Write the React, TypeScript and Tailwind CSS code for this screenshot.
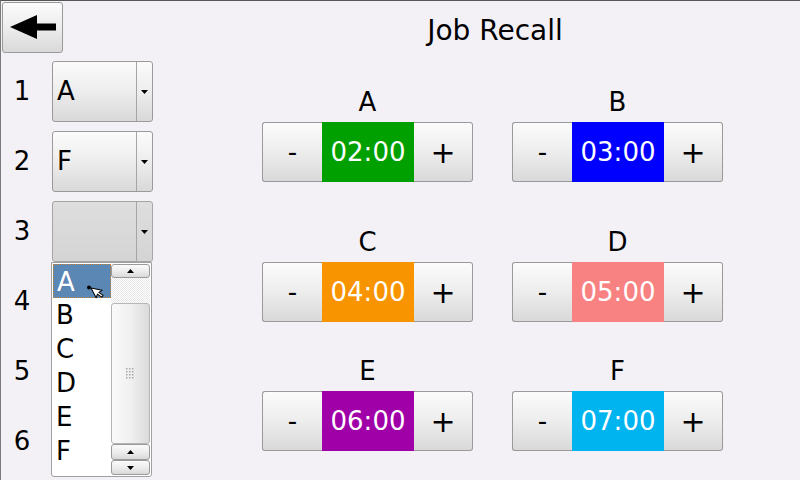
import React from "react";

const jobs = [
  { letter: "A", time: "02:00", color: "bg-[#00a000]" },
  { letter: "B", time: "03:00", color: "bg-[#0000ff]" },
  { letter: "C", time: "04:00", color: "bg-[#f89400]" },
  { letter: "D", time: "05:00", color: "bg-[#f88282]" },
  { letter: "E", time: "06:00", color: "bg-[#a000a8]" },
  { letter: "F", time: "07:00", color: "bg-[#00b4f0]" },
];

const rowGaps = ["mt-[40px]", "mt-[45px]", "mt-[34px]"];

const btnFace =
  "bg-linear-to-b from-[#fbfbfb] via-[#ededed] to-[#d9d9d9] border-[#9a9a9a]";

const Arrow = () => (
  <svg width="7" height="4" viewBox="0 0 7 4">
    <path d="M0 0 L7 0 L3.5 4 Z" fill="#000" />
  </svg>
);

const UpArrow = () => (
  <svg width="7" height="4" viewBox="0 0 7 4">
    <path d="M0 4 L7 4 L3.5 0 Z" fill="#000" />
  </svg>
);

const Combo = ({ value, open }: { value?: string; open?: boolean }) => (
  <div
    className={`relative flex h-[61px] w-[101px] rounded-[3px] border ${
      open
        ? "border-[#a5a5a5] bg-linear-to-b from-[#dedede] to-[#d4d4d4]"
        : btnFace
    }`}
  >
    <div className="flex flex-1 items-center pl-[4px] text-[26px]">{value}</div>
    <div className="flex w-[16px] items-center justify-center border-l border-[#a5a5a5]">
      <Arrow />
    </div>
    {open && <DropList />}
  </div>
);

const DropList = () => (
  <div className="absolute left-[-2px] top-full z-10 mt-[1px] flex h-[215px] w-[101px] rounded-b-[3px] border border-[#a0a0a0] bg-white p-[1px]">
    <div className="relative flex w-[58px] flex-col">
      {["A", "B", "C", "D", "E", "F"].map((l, i) => (
        <div
          key={l}
          className={`h-[34px] pl-[3px] text-[26px] leading-[34px] ${
            i === 0
              ? "border border-dotted border-[#c08040] bg-[#5b87b4] pl-[2px] leading-[32px] text-white"
              : "text-black"
          }`}
        >
          {l}
        </div>
      ))}
      {/* mouse pointer */}
      <svg
        className="absolute left-[33px] top-[20px]"
        width="20"
        height="20"
        viewBox="0 0 20 20"
      >
        <path
          d="M5 4 L5 15 L7.8 12.4 L10.2 17.2 L12.2 16.2 L9.9 11.5 L13.8 11.3 Z"
          fill="#fff"
          stroke="#000"
          strokeWidth="1"
          strokeLinejoin="round"
          transform="rotate(-28 5 4)"
        />
        <circle cx="3" cy="3.5" r="2" fill="#000" />
      </svg>
    </div>
    <div className="flex w-[39px] flex-col">
      <div className={`flex h-[14px] items-center justify-center rounded-[3px] border ${btnFace}`}>
        <UpArrow />
      </div>
      <div className="h-[25px] bg-[repeating-conic-gradient(#e6e6e6_0_25%,#ffffff_0_50%)] bg-[length:2px_2px]" />
      <div className="flex h-[141px] items-center justify-center rounded-[3px] border border-[#b5b5b5] bg-linear-to-r from-[#fafafa] via-[#f0f0f0] to-[#dadada]">
        <svg width="9" height="12" viewBox="0 0 9 12">
          {[0, 1, 2].map((c) =>
            [0, 1, 2, 3].map((r) => (
              <rect key={`${c}-${r}`} x={c * 3} y={r * 3} width="1.5" height="1.5" fill="#a8a8a8" />
            ))
          )}
        </svg>
      </div>
      <div className={`flex h-[16px] items-center justify-center rounded-[3px] border ${btnFace}`}>
        <UpArrow />
      </div>
      <div className={`flex h-[15px] items-center justify-center rounded-[3px] border ${btnFace}`}>
        <Arrow />
      </div>
    </div>
  </div>
);

const Stepper = ({ time, color }: { time: string; color: string }) => (
  <div className="mt-[5px] flex h-[60px] w-[211px]">
    <div className={`flex w-[60px] items-center justify-center rounded-l-[3px] border border-r-0 text-[26px] ${btnFace}`}>
      -
    </div>
    <div className={`flex w-[92px] items-center justify-center text-[26px] text-white ${color}`}>
      {time}
    </div>
    <div className={`flex w-[59px] items-center justify-center rounded-r-[3px] border border-l-0 text-[30px] ${btnFace}`}>
      +
    </div>
  </div>
);

const App = () => {
  const rows = [jobs.slice(0, 2), jobs.slice(2, 4), jobs.slice(4, 6)];
  const combos: (string | undefined)[] = ["A", "F", ""];

  return (
    <div className="flex h-[480px] w-[800px] overflow-hidden border-l border-t border-l-[#7a7a7a] border-t-[#555] bg-[#f4f1f6] font-['DejaVu_Sans',sans-serif] text-black">
      <div className="flex w-[160px] flex-col pl-[1px] pt-[1px]">
        <button
          type="button"
          className={`flex h-[51px] w-[61px] items-center justify-center rounded-[3px] border ${btnFace}`}
        >
          <svg width="59" height="49" viewBox="0 0 59 49">
            <path d="M7 24 L34 12 L34 36 Z" fill="#000" />
            <rect x="33" y="20.5" width="20" height="7" fill="#000" />
          </svg>
        </button>
        <div className="mt-[8px] flex flex-col gap-[9px]">
          {[1, 2, 3, 4, 5, 6].map((n, i) => (
            <div key={n} className="flex h-[61px] items-center">
              <div className="ml-[-1px] w-[42px] text-center text-[26px]">{n}</div>
              {i < 3 && (
                <div className="ml-[9px]">
                  <Combo value={combos[i]} open={i === 2} />
                </div>
              )}
            </div>
          ))}
        </div>
      </div>
      <div className="flex flex-col pl-[101px]">
        <div className="mt-[14px] w-[466px] text-center text-[28px] leading-[32px]">
          Job Recall
        </div>
        {rows.map((row, i) => (
          <div key={i} className={`flex gap-[39px] ${rowGaps[i]}`}>
            {row.map((j) => (
              <div key={j.letter} className="flex flex-col items-center">
                <div className="h-[30px] text-[26px] leading-[30px]">{j.letter}</div>
                <Stepper time={j.time} color={j.color} />
              </div>
            ))}
          </div>
        ))}
      </div>
    </div>
  );
};

export default App;
